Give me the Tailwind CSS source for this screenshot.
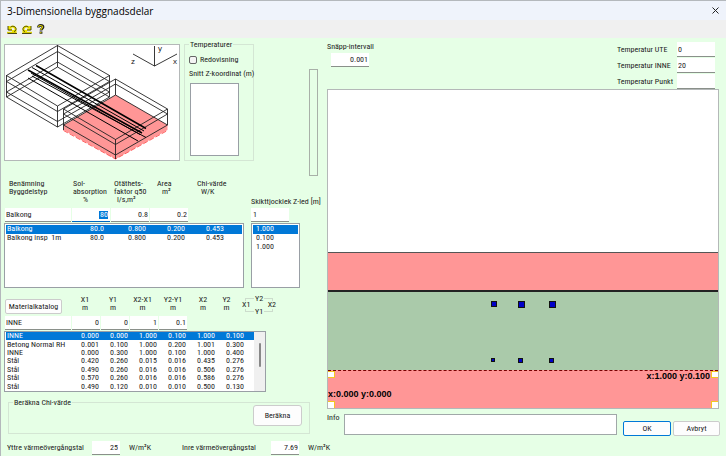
<!DOCTYPE html>
<html lang="sv">

<head>
    <meta charset="UTF-8">
    <meta name="viewport" content="width=device-width, initial-scale=1.0">
    <title>3-Dimensionella byggnadsdelar</title>
    <script src="https://cdn.jsdelivr.net/npm/@tailwindcss/browser@4"></script>
</head>

<body class="min-h-screen bg-[#e6ffe6] font-['Roboto_Condensed','Open_Sans_Condensed','Roboto',sans-serif] text-[8px] leading-[8px] text-[#222] overflow-hidden">
    <div class="min-h-screen border-t border-l border-[#b4b8bc]">

        <!-- Title bar -->
        <header class="flex items-center justify-between h-[19px] pl-[6px] pr-[7px] bg-[#eff3fb]">
            <h1 class="font-['Open_Sans',sans-serif] text-[10px] leading-[14px] text-black">3-Dimensionella byggnadsdelar</h1>
            <button aria-label="Stäng">
                <svg class="size-[7px]" viewBox="0 0 7 7" stroke="#222" fill="none"><path d="M.5 .5l6 6M6.500 .5l-6 6" /></svg>
            </button>
        </header>

        <!-- Toolbar -->
        <nav class="flex items-center gap-[5px] h-[18px] pl-[6px] bg-[#f0f0f0]">
            <button aria-label="Ångra">
                <svg class="w-[10px] h-[9px]" viewBox="0 0 10 9" fill="none"><path d="M0 7.500H9.500" stroke="#d8cc00" stroke-width="1.400" /><path d="M2 5V1M2 4.500H5M3 3C5 .5 8.500 1.500 8.500 4.500V6H5" stroke="#f0e400" stroke-width="2" /><path d="M1 1V5H5M3.500 2C5.500 .5 9.500 1.500 9 4.500Q9 6 7 6.500M.5 8.500H10" stroke="#3a3800" stroke-width=".9" /></svg>
            </button>
            <button aria-label="Gör om">
                <svg class="w-[10px] h-[9px]" viewBox="0 0 10 9" fill="none"><path d="M.5 7.500H10" stroke="#d8cc00" stroke-width="1.400" /><path d="M8 5V1M8 4.500H5M7 3C5 .5 1.500 1.500 1.500 4.500V6H5" stroke="#f0e400" stroke-width="2" /><path d="M9 1V5H5M6.500 2C4.500 .5 .5 1.500 1 4.500Q1 6 3 6.500M0 8.500H9.500" stroke="#3a3800" stroke-width=".9" /></svg>
            </button>
            <button aria-label="Hjälp">
                <svg class="w-[8px] h-[10px]" viewBox="0 0 8 10" fill="none"><path d="M1.500 3.500C1.500 .8 6 .8 6 3C6 4.500 4 4.500 4 6.500M4 7.500V9.800" stroke="#222" stroke-width="2.800" /><path d="M1.500 3C1.500 1 5.500 1 5.500 3C5.500 4 3.800 4.500 3.800 6M3.800 8V9.200" stroke="#e0d400" stroke-width="1.200" /></svg>
            </button>
        </nav>

        <main class="flex gap-[9px] pt-[6px] pl-[3px] pr-[6px]">

            <!-- Left side -->
            <div class="w-[314px] shrink-0">
                <div class="flex h-[136px]">
                    <svg class="w-[176px] h-[117px] shrink-0 border border-[#b4b8b8] bg-white" viewBox="5 45 174 115" fill="none" stroke="#222" stroke-width=".9">
                        <path d="M63.500 125L115.500 95L167.500 125V130L115.500 159L63.500 130Z" fill="#ff9696" stroke="none" />
                        <path d="M63.500 130.500L115.500 159L167.500 130.500" stroke="#ff5050" stroke-dasharray="5 2" />
                        <!-- rear block -->
                        <path d="M6.500 75.500L57.500 45.500L109.500 75.500L57.500 106Z M6.500 81.500L57.500 51.500L109.500 81.500L57.500 111.500Z M6.500 92L57.500 62L109.500 92L57.500 121.500Z M6.500 97L57.500 67L109.500 97L57.500 127Z" />
                        <path d="M6.500 75V97M57.500 45V67M109.500 75V97M57.500 106V127" />
                        <!-- front block -->
                        <path d="M63.500 109L115.500 79L167.500 109L115.500 139.500Z M63.500 114L115.500 84L167.500 114L115.500 144.500Z M63.500 125L115.500 95L167.500 125L115.500 155Z" />
                        <path d="M63.500 109V130M115.500 79V95M167.500 109V125M115.500 139V159" />
                        <!-- bars -->
                        <path d="M36 65.500L146 128.500M28 70L142 133" stroke="#000" stroke-width="1.500" />
                        <path d="M32 67.500L144 131M31 73L140 134.500M32 76L146 137.500M28 78L138 141" stroke="#000" stroke-width="1" />
                        <path d="M154.500 46V66L133 54M154.500 66L177 54" />
                        <g class="text-[8px] font-['Liberation_Sans']" fill="#222" stroke="none">
                            <text x="158" y="51">y</text>
                            <text x="131" y="64">z</text>
                            <text x="173" y="64">x</text>
                        </g>
                    </svg>
                    <fieldset class="relative w-[70px] min-w-0 shrink-0 h-[117px] ml-[4px] border border-[#d4e6d4] px-[4px] pt-[11px]">
                        <legend class="absolute -top-[4px] left-[4px] px-px bg-[#e6ffe6]">Temperaturer</legend>
                        <label class="flex items-center gap-[3px] whitespace-nowrap">
                            <input type="checkbox" class="appearance-none size-[8px] rounded-[2px] border border-[#666] bg-[#f4f4f4]">Redovisning
                        </label>
                        <label for="snitt" class="block mt-[6px] whitespace-nowrap">Snitt Z-koordinat (m)</label>
                        <select id="snitt" size="5" class="block w-[49px] h-[73px] mt-[5px] ml-px border border-[#999fa5] bg-white"></select>
                    </fieldset>
                    <div role="scrollbar" aria-label="Z-led" class="w-[9px] h-[107px] mt-[25px] ml-auto border border-[#a8b0a8]"></div>
                </div>

                <!-- Building parts -->
                <div class="flex gap-[7px]">
                    <div class="w-[240px]">
                        <div class="flex h-[28px] pl-[5px] whitespace-nowrap leading-[8px]">
                            <div class="w-[64px]">Benämning<br>Byggdelstyp</div>
                            <div class="w-[41px]">Sol-<br>absorption<br><span class="block pl-[10px]">%</span></div>
                            <div class="w-[43px]">Otäthets-<br>faktor q50<br><span class="block pl-[3px]">l/s,m²</span></div>
                            <div class="w-[40px]">Area<br><span class="block pl-[5px]">m²</span></div>
                            <div>Chi-värde<br><span class="block pl-[4px]">W/K</span></div>
                        </div>
                        <div class="flex h-[14px] pl-px gap-px">
                            <input aria-label="Benämning" value="Balkong" class="w-[66px] px-px bg-white border-b border-[#8a908a]">
                            <div class="flex items-center justify-end w-[38px] pr-[2px] bg-white border-b border-[#0067c0]"><input aria-label="Solabsorption" value="80" class="w-[9px] h-[8px] bg-[#0078d7] text-white text-right"></div>
                            <input aria-label="Otäthetsfaktor" value="0.8" class="w-[38px] px-px bg-white text-right border-b border-[#8a908a]">
                            <input aria-label="Area" value="0.2" class="w-[38px] px-px bg-white text-right border-b border-[#8a908a]">
                        </div>
                        <div class="h-[65px] mt-px p-px border border-[#999fa5] bg-white">
                            <table class="table-fixed w-full h-[17px] text-right">
                                <tr class="bg-[#0078d7] text-white"><td class="w-[60px] pl-px text-left">Balkong</td><td class="w-[38px]">80.0</td><td class="w-[42px]">0.800</td><td class="w-[39px]">0.200</td><td class="w-[39px]">0.453</td><td></td></tr>
                                <tr><td class="pl-px text-left whitespace-nowrap">Balkong insp&nbsp; 1m</td><td>80.0</td><td>0.800</td><td>0.200</td><td>0.453</td><td></td></tr>
                            </table>
                        </div>
                    </div>
                    <div class="w-[49px] pt-[18px]">
                        <label for="skikt" class="block h-[10px] whitespace-nowrap">Skikttjocklek Z-led [m]</label>
                        <input id="skikt" value="1" class="block w-[38px] h-[14px] px-[2px] bg-white border-b border-[#8a908a]">
                        <div class="h-[65px] mt-px p-px border border-[#999fa5] bg-white">
                            <table class="w-full h-[26px]">
                                <tr class="bg-[#0078d7] text-white"><td class="pl-[3px]">1.000</td></tr>
                                <tr><td class="pl-[3px]">0.100</td></tr>
                                <tr><td class="pl-[3px]">1.000</td></tr>
                            </table>
                        </div>
                    </div>
                </div>

                <!-- Materials -->
                <div class="flex h-[20px] mt-[8px] text-center">
                    <button class="w-[57px] h-[15px] mt-[3px] ml-px mr-[9px] rounded-[2px] border border-[#ccc] bg-[#fdfdfd]">Materialkatalog</button>
                    <div class="w-[28px]">X1<br>m</div>
                    <div class="w-[28px]">Y1<br>m</div>
                    <div class="w-[31px]">X2-X1<br>m</div>
                    <div class="w-[30px]">Y2-Y1<br>m</div>
                    <div class="w-[30px]">X2<br>m</div>
                    <div class="w-[17px]">Y2<br>m</div>
                    <div class="relative w-[28px] h-[14px] mt-[2px] ml-[10px] border border-[#ccdccc]">
                        <span class="absolute -top-[4px] left-[8px] px-px bg-[#e6ffe6]">Y2</span>
                        <span class="absolute top-[2px] -left-[4px] bg-[#e6ffe6]">X1</span>
                        <span class="absolute top-[2px] -right-[4px] bg-[#e6ffe6]">X2</span>
                        <span class="absolute -bottom-[5px] left-[8px] px-px bg-[#e6ffe6]">Y1</span>
                    </div>
                </div>
                <div class="flex h-[14px] pl-px gap-px">
                    <input aria-label="Material" value="INNE" class="w-[66px] px-px bg-white border-b border-[#8a908a]">
                    <input aria-label="X1" value="0" class="w-[28px] px-px bg-white text-right border-b border-[#8a908a]">
                    <input aria-label="Y1" value="0" class="w-[28px] px-px bg-white text-right border-b border-[#8a908a]">
                    <input aria-label="X2-X1" value="1" class="w-[28px] px-px bg-white text-right border-b border-[#8a908a]">
                    <input aria-label="Y2-Y1" value="0.1" class="w-[28px] px-px bg-white text-right border-b border-[#8a908a]">
                </div>
                <div class="flex w-[262px] h-[61px] mt-px border border-[#999fa5] bg-white">
                    <table class="table-fixed w-[248px] h-[59px] ml-px text-right whitespace-nowrap">
                        <tr class="bg-[#0078d7] text-white"><td class="w-[64px] pl-px text-left">INNE</td><td class="w-[29px]">0.000</td><td class="w-[29px]">0.000</td><td class="w-[29px]">1.000</td><td class="w-[29px]">0.100</td><td class="w-[29px]">1.000</td><td class="w-[29px]">0.100</td><td></td></tr>
                        <tr><td class="pl-px text-left">Betong Normal RH</td><td>0.001</td><td>0.100</td><td>1.000</td><td>0.200</td><td>1.001</td><td>0.300</td><td></td></tr>
                        <tr><td class="pl-px text-left">INNE</td><td>0.000</td><td>0.300</td><td>1.000</td><td>0.100</td><td>1.000</td><td>0.400</td><td></td></tr>
                        <tr><td class="pl-px text-left">Stål</td><td>0.420</td><td>0.260</td><td>0.015</td><td>0.016</td><td>0.435</td><td>0.276</td><td></td></tr>
                        <tr><td class="pl-px text-left">Stål</td><td>0.490</td><td>0.260</td><td>0.016</td><td>0.016</td><td>0.506</td><td>0.276</td><td></td></tr>
                        <tr><td class="pl-px text-left">Stål</td><td>0.570</td><td>0.260</td><td>0.016</td><td>0.016</td><td>0.586</td><td>0.276</td><td></td></tr>
                        <tr><td class="pl-px text-left">Stål</td><td>0.490</td><td>0.120</td><td>0.010</td><td>0.010</td><td>0.500</td><td>0.130</td><td></td></tr>
                    </table>
                    <div class="flex-1 bg-[#f0f0f0] pt-[11px]"><div class="w-[2px] h-[24px] mx-auto rounded bg-[#888]"></div></div>
                </div>

                <fieldset class="relative flex justify-end h-[32px] mt-[10px] ml-[4px] mr-[8px] pt-[2px] pr-[7px] border border-[#d4e6d4]">
                    <legend class="absolute -top-[4px] left-[4px] px-px bg-[#e6ffe6]">Beräkna Chi-värde</legend>
                    <button class="w-[49px] h-[21px] rounded-[3px] border border-[#ccc] bg-[#fdfdfd]">Beräkna</button>
                </fieldset>

                <div class="flex items-center h-[14px] mt-[7px] pl-[3px] whitespace-nowrap">
                    <label for="yttre" class="w-[85px] shrink-0">Yttre värmeövergångstal</label>
                    <input id="yttre" value="25" class="w-[28px] h-[14px] shrink-0 px-[2px] bg-white text-right border-b border-[#8a908a]">
                    <span class="w-[54px] shrink-0 pl-[9px]">W/m²K</span>
                    <label for="inre" class="w-[97px] shrink-0 pl-[8px]">Inre värmeövergångstal</label>
                    <input id="inre" value="7.69" class="w-[28px] h-[14px] shrink-0 px-px bg-white text-right border-b border-[#8a908a]">
                    <span class="shrink-0 pl-[9px]">W/m²K</span>
                </div>
            </div>

            <!-- Right side -->
            <div class="flex-1 min-w-0">
                <div class="flex justify-between h-[45px]">
                    <div class="-mt-px">
                        <label for="snapp" class="block whitespace-nowrap">Snäpp-intervall</label>
                        <input id="snapp" value="0.001" class="block w-[38px] h-[14px] mt-[2px] ml-[4px] px-px bg-white text-right border-b border-[#8a908a]">
                    </div>
                    <div class="grid grid-cols-[60px_38px] auto-rows-[15px] gap-y-px items-center -mt-[2px] mr-[5px] whitespace-nowrap">
                        <label for="ute">Temperatur UTE</label>
                        <input id="ute" value="0" class="w-full h-[15px] px-px bg-white border-b border-[#8a908a]">
                        <label for="inne">Temperatur INNE</label>
                        <input id="inne" value="20" class="w-full h-[15px] px-px bg-white border-b border-[#8a908a]">
                        <label for="punkt">Temperatur Punkt</label>
                        <input id="punkt" class="w-full h-[15px] px-px bg-white border-b border-[#8a908a]">
                    </div>
                </div>

                <!-- Section drawing -->
                <div class="relative h-[320px] mr-px border border-[#b4b8b8] bg-white overflow-hidden font-['Liberation_Sans',sans-serif] font-bold text-[9px] leading-[10px] text-black">
                    <div class="h-[162px]"></div>
                    <div class="h-[38px] bg-[#ff9696] border-t border-[#555]"></div>
                    <div class="h-[80px] bg-[#aacaaa] border-t-2 border-[#222]"></div>
                    <div class="h-[38px] bg-[#ff9696] border-t border-dashed border-[#700]"></div>
                    <i class="absolute left-[163px] top-[211px] size-[6px] bg-[#0000c8] border border-[#111]"></i>
                    <i class="absolute left-[190px] top-[211px] size-[7px] bg-[#0000c8] border border-[#111]"></i>
                    <i class="absolute left-[221px] top-[211px] size-[7px] bg-[#0000c8] border border-[#111]"></i>
                    <i class="absolute left-[163px] top-[268px] size-[4px] bg-[#0000c8] border border-[#111]"></i>
                    <i class="absolute left-[190px] top-[268px] size-[5px] bg-[#0000c8] border border-[#111]"></i>
                    <i class="absolute left-[221px] top-[268px] size-[5px] bg-[#0000c8] border border-[#111]"></i>
                    <i class="absolute left-0 bottom-[30px] size-[7px] bg-white border-t border-r border-b border-[#f4c820]"></i>
                    <i class="absolute left-0 bottom-0 size-[7px] bg-white border-t border-r border-[#f4c820]"></i>
                    <i class="absolute right-0 bottom-[30px] size-[7px] bg-white border-t border-l border-b border-[#f4c820]"></i>
                    <i class="absolute right-0 bottom-0 size-[7px] bg-white border-t border-l border-[#f4c820]"></i>
                    <span class="absolute left-0 bottom-[9px]">x:0.000 y:0.000</span>
                    <span class="absolute right-[8px] bottom-[27px]">x:1.000 y:0.100</span>
                </div>

                <div class="flex mt-[5px]">
                    <label for="info" class="w-[17px]">Info</label>
                    <input id="info" class="flex-1 min-w-0 h-[21px] border border-[#a0a8a8] bg-white">
                    <button class="w-[48px] h-[15px] mt-[7px] ml-[6px] rounded-[2px] border border-[#0078d7] bg-[#fdfdfd]">OK</button>
                    <button class="w-[47px] h-[15px] mt-[7px] ml-[2px] rounded-[2px] border border-[#ccc] bg-[#fdfdfd]">Avbryt</button>
                </div>
            </div>
        </main>
    </div>
</body>

</html>
